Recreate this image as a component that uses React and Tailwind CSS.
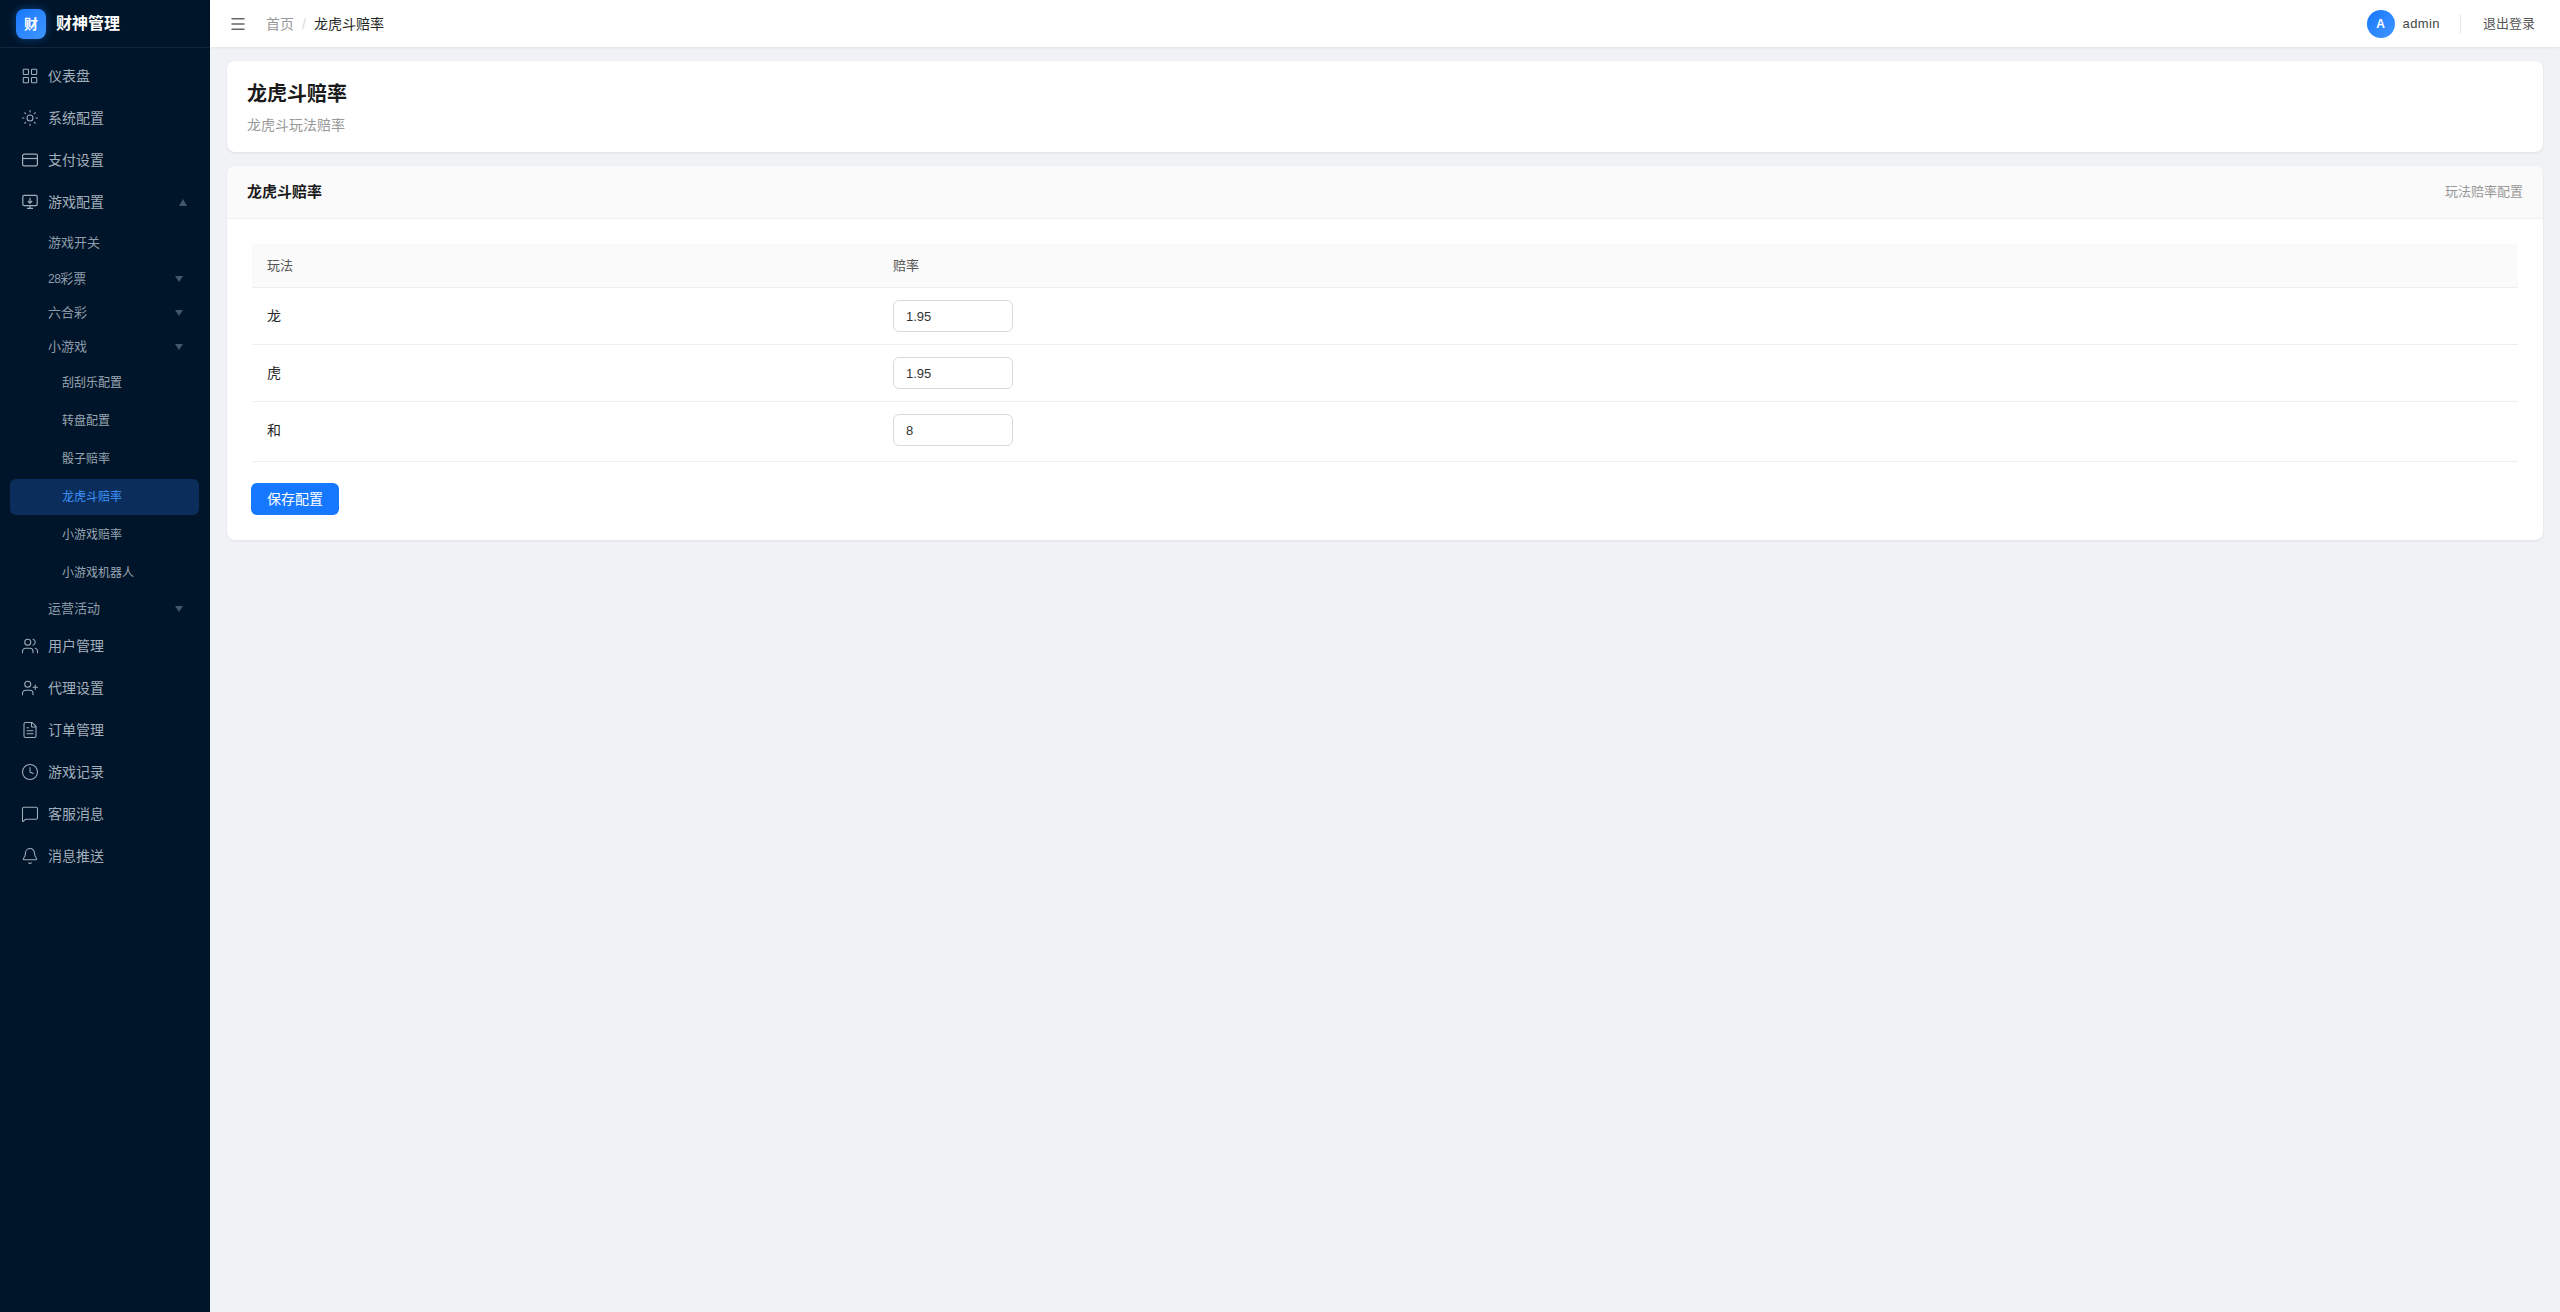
import { LayoutGrid, Sun, Users, UserPlus, FileText, Clock, MessageSquare, Bell, Menu } from 'lucide-react'

function CardIcon() {
  return (
    <svg width="16" height="16" viewBox="0 0 16 16" fill="none" stroke="currentColor" strokeWidth="1.2">
      <rect x="0.6" y="2.2" width="14.8" height="11.6" rx="1.6" />
      <path d="M0.6 6.5h14.8" />
    </svg>
  )
}

function MonitorIcon() {
  return (
    <svg width="16" height="16" viewBox="0 0 16 16" fill="none" stroke="currentColor" strokeWidth="1.2">
      <rect x="0.8" y="1.4" width="14.4" height="10.2" rx="1.4" />
      <path d="M8 3.8v5.4M5.8 7l2.2 2.2L10.2 7M5 14.4h6M8 11.6v2.8" />
    </svg>
  )
}

function TopItem({ icon: Icon, label, caret }) {
  return (
    <div className="h-[42px] flex items-center pl-[21px] pr-[23px] text-sm text-[#a3aebb]">
      <span className="w-[18px] mr-[9px] flex justify-center"><Icon size={18} strokeWidth={1.4} /></span>
      <span className="flex-1">{label}</span>
      {caret && <span className="w-0 h-0 border-x-[4px] border-x-transparent border-b-[7px] border-b-[#45566b]" />}
    </div>
  )
}

function SubItem({ label, caret, height = 'h-[34px]' }) {
  return (
    <div className={`${height} flex items-center pl-[48px] pr-[27px] text-[13px] text-[#8f9cab]`}>
      <span className="flex-1">{label}</span>
      {caret && <span className="w-0 h-0 border-x-[4px] border-x-transparent border-t-[6px] border-t-[#45566b]" />}
    </div>
  )
}

function LeafItem({ label, active }) {
  return (
    <div className="h-[38px] py-px mx-[10px] w-[189px]">
      <div className={`h-[36px] flex items-center pl-[52px] text-xs rounded-md ${active ? 'bg-[#0a2d5c] text-[#4096ff]' : 'text-[#9aa6b2]'}`}>
        {label}
      </div>
    </div>
  )
}

function Sidebar() {
  return (
    <aside className="w-[210px] flex-none bg-[#001529] min-h-[1312px]">
      <div className="h-[48px] flex items-center pl-[16px] border-b border-[#13263b]">
        <div className="w-[30px] h-[30px] rounded-lg bg-gradient-to-br from-[#1677ff] to-[#4096ff] shadow-[0_0_8px_rgba(22,119,255,0.45)] flex items-center justify-center text-white text-sm font-bold">财</div>
        <span className="ml-[10px] text-base font-bold text-white">财神管理</span>
      </div>
      <nav className="pt-[7px]">
        <TopItem icon={LayoutGrid} label="仪表盘" />
        <TopItem icon={Sun} label="系统配置" />
        <TopItem icon={CardIcon} label="支付设置" />
        <TopItem icon={MonitorIcon} label="游戏配置" caret />
        <SubItem label="游戏开关" height="h-[39px]" />
        <SubItem label={<><span className="text-xs tracking-[-0.5px]">28</span>彩票</>} caret />
        <SubItem label="六合彩" caret />
        <SubItem label="小游戏" caret />
        <LeafItem label="刮刮乐配置" />
        <LeafItem label="转盘配置" />
        <LeafItem label="骰子赔率" />
        <LeafItem label="龙虎斗赔率" active />
        <LeafItem label="小游戏赔率" />
        <LeafItem label="小游戏机器人" />
        <SubItem label="运营活动" caret height="h-[33px]" />
        <TopItem icon={Users} label="用户管理" />
        <TopItem icon={UserPlus} label="代理设置" />
        <TopItem icon={FileText} label="订单管理" />
        <TopItem icon={Clock} label="游戏记录" />
        <TopItem icon={MessageSquare} label="客服消息" />
        <TopItem icon={Bell} label="消息推送" />
      </nav>
    </aside>
  )
}

function Header() {
  return (
    <header className="h-[47px] bg-white flex items-center pl-[19px] pr-[25px] shadow-[0_1px_3px_rgba(0,0,0,0.06)]">
      <Menu size={18} strokeWidth={2} className="text-[#666]" />
      <span className="ml-[19px] text-sm text-[#999]">首页</span>
      <span className="mx-[8px] text-sm text-[#d9d9d9]">/</span>
      <span className="text-sm text-[#262626]">龙虎斗赔率</span>
      <div className="ml-auto flex items-center">
        <div className="w-[28px] h-[28px] rounded-full bg-gradient-to-br from-[#1677ff] to-[#4096ff] flex items-center justify-center text-white text-xs font-bold">A</div>
        <span className="ml-[8px] text-[13px] tracking-[0.4px] text-[#444]">admin</span>
        <span className="ml-[20px] w-px h-[20px] bg-[#e8e8e8]" />
        <span className="ml-[22px] text-[13px] text-[#555]">退出登录</span>
      </div>
    </header>
  )
}

const rows = [
  { name: '龙', value: '1.95' },
  { name: '虎', value: '1.95' },
  { name: '和', value: '8' },
]

function Row({ name, value, last }) {
  return (
    <div className={`${last ? 'box-content h-[56px] pb-[3px]' : 'h-[57px]'} flex items-center border-b border-[#eeeeee] text-sm text-[#262626]`}>
      <div className="w-[625px] pl-[15px]">{name}</div>
      <div className="pl-[16px]">
        <input
          readOnly
          value={value}
          className="w-[120px] h-[32px] px-[12px] border border-[#d9d9d9] rounded-md text-[13px] text-[#333] outline-none"
        />
      </div>
    </div>
  )
}

export default function App() {
  return (
    <div className="flex min-h-[1312px] bg-[#f0f2f5] font-['Liberation_Sans','Noto_Sans_CJK_SC',sans-serif]">
      <Sidebar />
      <div className="flex-1 min-w-0">
        <Header />
        <main className="pt-[14px] pl-[17px] pr-[17px] flex flex-col gap-[14px]">
          <section className="h-[91px] bg-white rounded-lg shadow-[0_1px_3px_rgba(0,0,0,0.08)] px-[20px] pt-[18px]">
            <h1 className="text-xl leading-[30px] font-bold text-[#1a1a1a]">龙虎斗赔率</h1>
            <p className="mt-[7px] text-sm leading-[18px] text-[#999]">龙虎斗玩法赔率</p>
          </section>
          <section className="h-[374px] bg-white rounded-lg shadow-[0_1px_3px_rgba(0,0,0,0.08)] overflow-hidden">
            <div className="h-[53px] bg-[#fafafa] border-b border-[#f0f0f0] flex items-center justify-between px-[20px]">
              <span className="text-[15px] font-bold text-[#1a1a1a]">龙虎斗赔率</span>
              <span className="text-[13px] text-[#999]">玩法赔率配置</span>
            </div>
            <div className="pt-[25px] pl-[25px] pr-[25px]">
              <div className="h-[44px] bg-[#fafafa] border-b border-[#eeeeee] flex items-center text-[13px] text-[#555]">
                <div className="w-[625px] pl-[15px]">玩法</div>
                <div className="pl-[16px]">赔率</div>
              </div>
              {rows.map((r, i) => (
                <Row key={r.name} name={r.name} value={r.value} last={i === rows.length - 1} />
              ))}
              <button className="-ml-px mt-[21px] w-[88px] h-[32px] bg-[#1677ff] rounded-md text-sm text-white">保存配置</button>
            </div>
          </section>
        </main>
      </div>
    </div>
  )
}
